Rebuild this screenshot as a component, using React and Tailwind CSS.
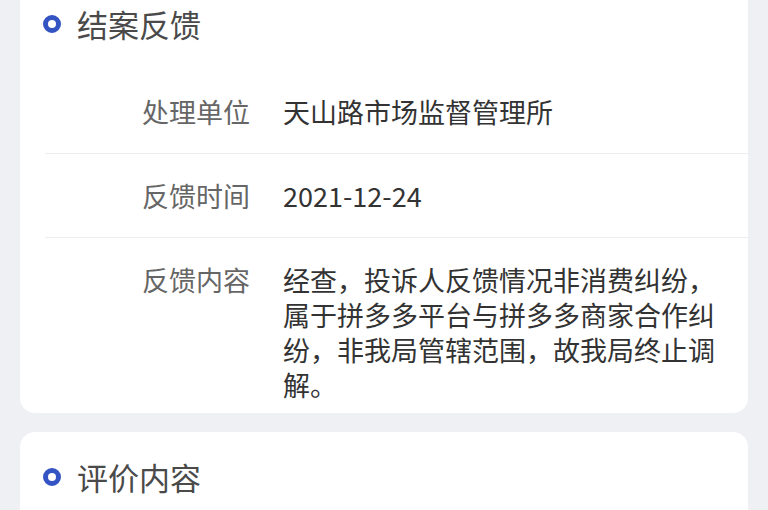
import React from "react";

const rows = [
  { label: "处理单位", value: "天山路市场监督管理所" },
  { label: "反馈时间", value: "2021-12-24" },
  {
    label: "反馈内容",
    value: "经查，投诉人反馈情况非消费纠纷，属于拼多多平台与拼多多商家合作纠纷，非我局管辖范围，故我局终止调解。",
  },
];

const SectionTitle = ({ children }) => (
  <div className="flex items-center pl-[23px] pt-[25px]">
    <span className="w-[18px] h-[18px] rounded-full border-[5px] border-[#3454c4] shrink-0" />
    <h3 className="ml-[16px] text-[31px] leading-[40px] text-[#4a4a4a]">{children}</h3>
  </div>
);

const App = () => {
  return (
    <div
      className="h-[510px] overflow-hidden bg-[#eef0f4] px-[20px]"
      style={{ fontFamily: '"Noto Sans CJK SC", "Noto Sans", sans-serif' }}
    >
      <div className="-mt-[21px] bg-white rounded-[15px] pb-[11px]">
        <SectionTitle>结案反馈</SectionTitle>
        <div className="mt-[26px] ml-[25px]">
          {rows.map((row, i) => (
            <div
              key={i}
              className={
                "flex pt-[24px] pr-[25px] " +
                (i < rows.length - 1 ? "pb-[24px] border-b border-[#ebedf0]" : "")
              }
            >
              <div className="w-[205px] shrink-0 text-right text-[27px] leading-[35px] text-[#666666]">
                {row.label}
              </div>
              <div className="ml-[33px] flex-1 text-[27px] leading-[35px] text-[#333333]">
                {row.value}
              </div>
            </div>
          ))}
        </div>
      </div>

      <div className="mt-[19px] bg-white rounded-[15px] pb-[30px]">
        <SectionTitle>评价内容</SectionTitle>
      </div>
    </div>
  );
};

export default App;
